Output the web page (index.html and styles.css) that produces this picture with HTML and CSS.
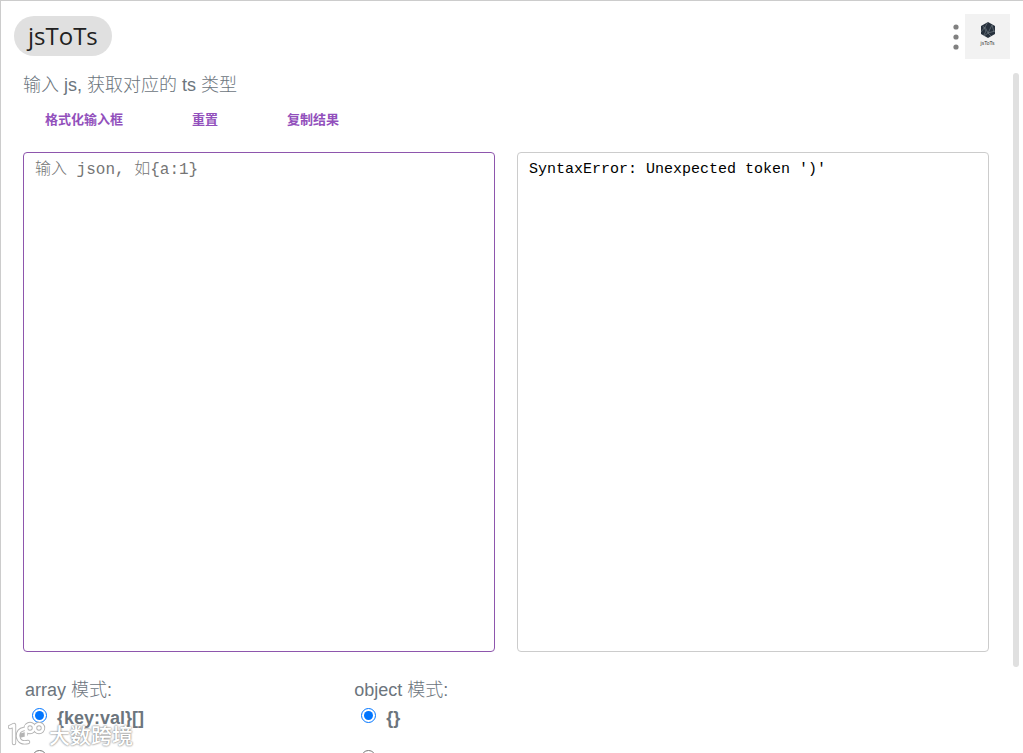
FILE: index.html
```html
<!DOCTYPE html>
<html lang="zh-CN">
<head>
    <meta charset="UTF-8" />
    <title>jsToTs</title>
    <link rel="stylesheet" href="styles.css">
</head>
<body>
    <div class="app">
        <header class="header">
            <h1 class="title">jsToTs</h1>
            <div class="header-right">
                <button class="more-btn" type="button" aria-label="more">
                    <svg width="6" height="26" viewBox="0 0 6 26" fill="#808080">
                        <circle cx="3" cy="3" r="2.6" />
                        <circle cx="3" cy="13" r="2.6" />
                        <circle cx="3" cy="23" r="2.6" />
                    </svg>
                </button>
                <div class="logo">
                    <svg width="16" height="16" viewBox="0 0 16 16">
                        <path d="M8 0 L15 4 V12 L8 16 L1 12 V4 Z" fill="#27313d" />
                        <path d="M1 10 L5 5 L8 0 M5 5 L8 11 L12 3 M8 11 L15 9 M4 14 L8 11 L11 14 M12 3 L14 10 M3 4 L6 9 L4 13" fill="none" stroke="#7b848c" stroke-width="0.6" />
                    </svg>
                    <span class="logo-name">jsToTs</span>
                </div>
            </div>
        </header>

        <main class="content">
            <label class="intro" for="source">输入 js, 获取对应的 ts 类型</label>
            <div class="actions">
                <button type="button">格式化输入框</button>
                <button type="button">重置</button>
                <button type="button">复制结果</button>
            </div>

            <div class="editors">
                <textarea id="source" class="editor active" placeholder="输入 json, 如{a:1}" spellcheck="false"></textarea>
                <textarea id="result" class="editor" aria-label="ts" spellcheck="false" readonly>SyntaxError: Unexpected token ')'</textarea>
            </div>

            <div class="modes">
                <div class="mode" role="radiogroup" aria-labelledby="array-mode">
                    <div class="mode-name" id="array-mode">array 模式:</div>
                    <label class="option"><input type="radio" name="array" checked><span>{key:val}[]</span></label>
                    <label class="option"><input type="radio" name="array"></label>
                </div>
                <div class="mode" role="radiogroup" aria-labelledby="object-mode">
                    <div class="mode-name" id="object-mode">object 模式:</div>
                    <label class="option"><input type="radio" name="object" checked><span>{}</span></label>
                    <label class="option"><input type="radio" name="object"></label>
                </div>
            </div>
        </main>

        <div class="scroll-thumb"></div>

        <div class="watermark">
            <svg width="38" height="26" viewBox="0 0 38 26" fill="none" stroke-linecap="round" stroke-linejoin="round">
                <g stroke="#b4b4b4" stroke-width="4.4">
                    <path d="M2 6 L6 4 V22 M16 8 Q10 9 10 15 Q11 23 20 21 M11 15 L18 13" />
                    <circle cx="22" cy="7" r="4" />
                    <circle cx="31" cy="7" r="4" />
                </g>
                <g stroke="#ffffff" stroke-width="2.6">
                    <path d="M2 6 L6 4 V22 M16 8 Q10 9 10 15 Q11 23 20 21 M18 15 V5" />
                    <circle cx="22" cy="7" r="4" />
                    <circle cx="31" cy="7" r="4" />
                </g>
            </svg>
            <span>大数跨境</span>
        </div>
    </div>
</body>
</html>
```
FILE: styles.css
```css
* {
    box-sizing: border-box;
}

body {
    margin: 0;
    font-family: "Liberation Sans", "Noto Sans CJK SC", sans-serif;
    color: #6c757d;
    background: #fff;
}

.app {
    position: relative;
    display: flex;
    flex-direction: column;
    height: 100vh;
    overflow: hidden;
    border-top: 1px solid #ccc;
    border-left: 1px solid #ccc;
}

.header {
    display: flex;
    justify-content: space-between;
    align-items: flex-start;
    padding: 13px 13px 0;
}

.title {
    margin: 2px 0 0;
    padding: 0 14px;
    border-radius: 20px;
    background: #e0e0e0;
    color: #212121;
    font-family: "Open Sans", "Noto Sans", sans-serif;
    font-size: 24px;
    font-weight: 400;
    line-height: 40px;
}

.header-right {
    display: flex;
    align-items: center;
    gap: 6px;
}

.more-btn {
    display: flex;
    padding: 0;
    border: none;
    background: none;
    cursor: pointer;
}

.logo {
    display: flex;
    flex-direction: column;
    align-items: center;
    width: 45px;
    height: 45px;
    padding-top: 8px;
    background: #f2f2f2;
}

.logo-name {
    margin-top: 2px;
    color: #333;
    font-size: 5px;
    line-height: 6px;
}

.content {
    flex: 1;
    min-height: 0;
    overflow: hidden;
    padding: 12px 34px 0 22px;
}

.intro {
    display: block;
    font-size: 18px;
    font-weight: 300;
    line-height: 28px;
}

.actions {
    display: flex;
    gap: 25px;
    margin-top: 8px;
}

.actions button {
    padding: 0 22px;
    border: none;
    background: none;
    color: #9250bc;
    font-family: "Noto Sans CJK SC", sans-serif;
    font-size: 13px;
    font-weight: 700;
    line-height: 24px;
    cursor: pointer;
}

.editors {
    display: flex;
    gap: 22px;
    margin-top: 21px;
}

.editor {
    flex: 1;
    min-width: 0;
    height: 500px;
    padding: 5px 11px;
    border: 1px solid #ccc;
    border-radius: 4px;
    outline: none;
    resize: none;
    background: #fff;
    color: #000;
    font-family: "Liberation Mono", "Noto Sans CJK SC", monospace;
    font-size: 15px;
    line-height: 24px;
}

.editor.active {
    border-color: #8e56ad;
}

.editor::placeholder {
    color: #757575;
    font-size: 16px;
    font-weight: 300;
}

.modes {
    display: grid;
    grid-template-columns: 1fr 2fr;
    margin: 24px -24px 0 0;
    padding-left: 2px;
}

.mode-name {
    font-size: 18px;
    font-weight: 300;
    line-height: 28px;
}

.option {
    display: flex;
    align-items: flex-start;
    gap: 10px;
    height: 42px;
    padding-left: 7px;
    font-size: 18px;
    font-weight: 700;
    line-height: 28px;
}

.option input {
    width: 15px;
    height: 15px;
    margin: 4px 0 0;
    accent-color: #0075ff;
}

/* overlays */
.scroll-thumb {
    position: absolute;
    top: 72px;
    right: 4px;
    width: 6px;
    height: 79%;
    border-radius: 3px;
    background: #e0e0e0;
}

.watermark {
    position: absolute;
    left: 7px;
    bottom: 5px;
    display: flex;
    align-items: center;
    gap: 3px;
    color: #fff;
    font-family: "Noto Sans CJK SC", sans-serif;
    font-size: 21px;
    font-weight: 500;
    line-height: 28px;
    text-shadow: 0 0 2px #888, 0 0 2px #999;
}
```
